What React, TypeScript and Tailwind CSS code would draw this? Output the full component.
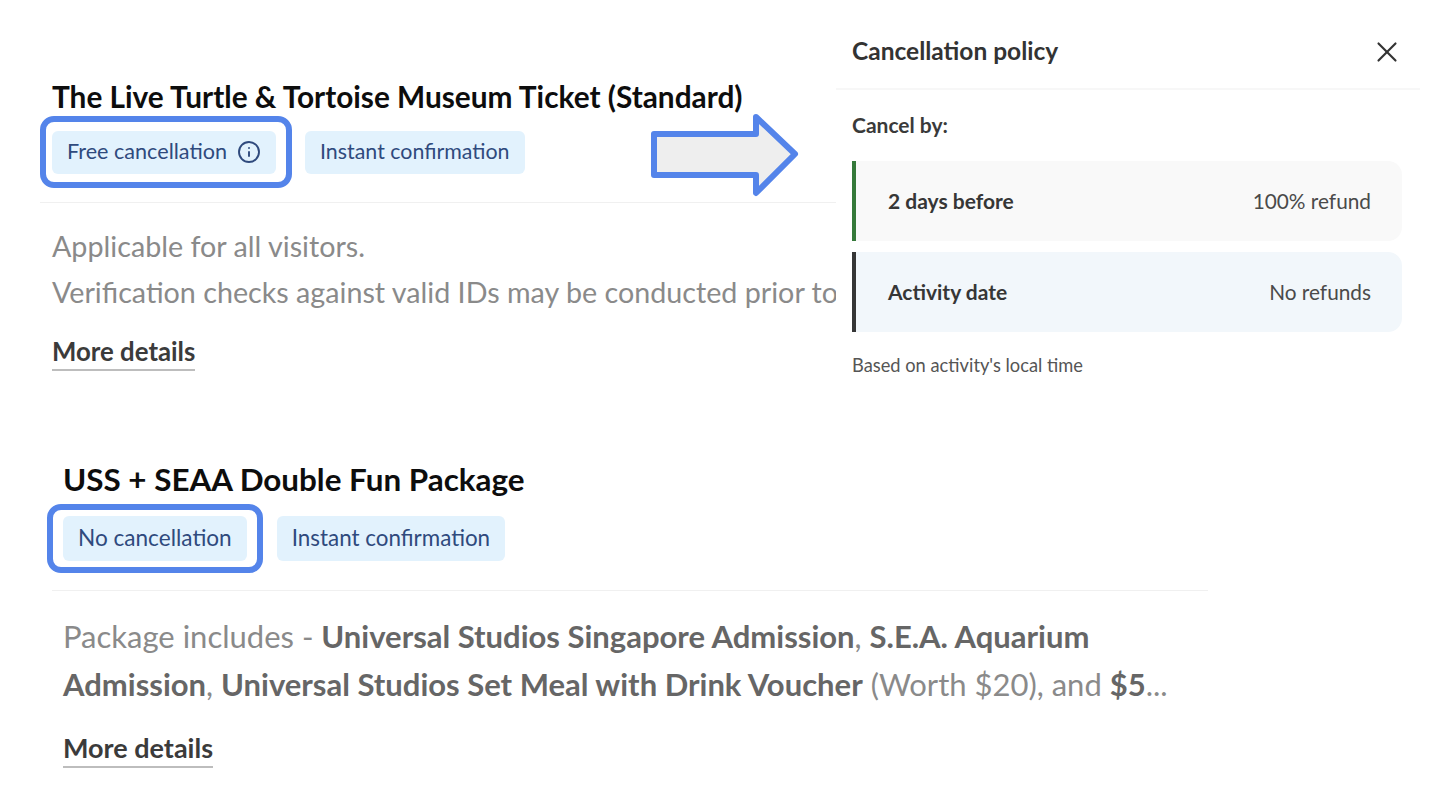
import type { ReactNode } from 'react'
import { Info, X } from 'lucide-react'

const FONT = 'font-["Lato","Noto_Sans",sans-serif]'

function Chip({ children, ring, size = 'h-[43px] text-[21.4px]' }: { children: ReactNode; ring?: string; size?: string }) {
  return (
    <span className={`relative flex items-center gap-[10px] rounded-[6px] bg-[#e2f2fd] px-[15px] pb-[2px] text-[#2f4a7d] ${size}`}>
      {children}
      {ring ? <span className={ring} /> : null}
    </span>
  )
}

function MoreDetails({ text }: { text: string }) {
  return (
    <a className={`inline-block border-b-[2px] border-[#bdbdbd] pb-[2px] font-bold leading-[32px] text-[#3b3b3b] ${text}`}>
      More details
    </a>
  )
}

function PolicyRow({ label, value, bar, bg }: { label: string; value: string; bar: string; bg: string }) {
  return (
    <div className={`flex h-[80px] items-center justify-between rounded-r-[14px] border-l-[4px] pl-[32px] pr-[31px] ${bar} ${bg}`}>
      <span className="text-[21px] font-bold text-[#363636]">{label}</span>
      <span className="text-[20.8px] text-[#4a4a4a]">{value}</span>
    </div>
  )
}

export default function App() {
  return (
    <div className={`relative h-[796px] w-[1444px] overflow-hidden bg-white ${FONT}`}>
      <div className="flex h-[440px]">
        <section className="w-[836px] shrink-0 overflow-hidden pl-[40px] pt-[78px]">
          <div className="pl-[12px]">
            <h2 className="text-[29.8px] font-bold leading-[38px] text-[#0d0d0d]">
              The Live Turtle &amp; Tortoise Museum Ticket (Standard)
            </h2>
            <div className="mt-[15px] flex gap-[29px]">
              <Chip
                size="h-[43px] text-[21.6px]"
                ring="absolute -left-[12px] -right-[16px] -top-[15px] -bottom-[14px] rounded-[14px] border-[6px] border-[#5484ea]"
              >
                Free cancellation
                <Info size={24} strokeWidth={1.9} />
              </Chip>
              <Chip>Instant confirmation</Chip>
            </div>
          </div>
          <div className="mt-[28px] h-[1px] bg-[#f0f0f0]" />
          <div className="whitespace-nowrap pl-[12px] pt-[20px] text-[28.7px] leading-[46px] text-[#8a8a8a]">
            <p>Applicable for all visitors.</p>
            <p>Verification checks against valid IDs may be conducted prior to</p>
          </div>
          <div className="mt-[20px] pl-[12px]">
            <MoreDetails text="text-[25.8px]" />
          </div>
        </section>

        <aside className="w-[584px] shrink-0">
          <header className="flex h-[90px] items-center justify-between border-b-[2px] border-[#f7f7f7] pl-[16px] pr-[16px] pt-[15px]">
            <h3 className="text-[24.5px] font-bold text-[#333333]">Cancellation policy</h3>
            <X size={34} strokeWidth={1.5} className="text-[#333333]" />
          </header>
          <div className="w-[566px] pl-[16px]">
            <p className="mt-[21px] text-[21px] font-bold leading-[28px] text-[#3a3a3a]">Cancel by:</p>
            <div className="mt-[22px] flex flex-col gap-[11px]">
              <PolicyRow label="2 days before" value="100% refund" bar="border-[#35793a]" bg="bg-[#f9f9f9]" />
              <PolicyRow label="Activity date" value="No refunds" bar="border-[#363636]" bg="bg-[#f2f7fb]" />
            </div>
            <p className="mt-[21px] text-[18.3px] leading-[24px] text-[#555555]">Based on activity's local time</p>
          </div>
        </aside>
      </div>

      <section className="ml-[52px] w-[1156px]">
        <div className="pl-[11px]">
          <h2 className="mt-[19px] text-[31.4px] font-bold leading-[40px] text-[#0d0d0d]">USS + SEAA Double Fun Package</h2>
          <div className="mt-[17px] flex gap-[30px]">
            <Chip
              size="h-[45px] text-[22.6px]"
              ring="absolute -left-[16px] -right-[16px] -top-[12px] -bottom-[12px] rounded-[14px] border-[6px] border-[#5484ea]"
            >
              No cancellation
            </Chip>
            <Chip size="h-[45px] text-[22.4px]">Instant confirmation</Chip>
          </div>
        </div>
        <div className="mt-[29px] h-[1px] bg-[#f0f0f0]" />
        <div className="pl-[11px] pt-[21px]">
          <p className="w-[1140px] text-[31px] leading-[48px] text-[#8a8a8a]">
            Package includes - <b className="text-[#666666]">Universal Studios Singapore Admission</b>,{' '}
            <b className="text-[#666666]">S.E.A. Aquarium</b>
            <br />
            <b className="text-[#666666]">Admission</b>, <b className="text-[#666666]">Universal Studios Set Meal with Drink Voucher</b> (Worth $20), and{' '}
            <b className="text-[#666666]">$5</b>...
          </p>
          <div className="mt-[24px]">
            <MoreDetails text="text-[27px]" />
          </div>
        </div>
      </section>

      <svg className="absolute left-[648px] top-[110px]" width="154" height="90" viewBox="0 0 154 90" fill="none">
        <path d="M6 24 H108 V7 L147 44 L108 83 V65 H6 Z" fill="#eeeeee" stroke="#5484ea" strokeWidth="6" strokeLinejoin="round" />
      </svg>
    </div>
  )
}
